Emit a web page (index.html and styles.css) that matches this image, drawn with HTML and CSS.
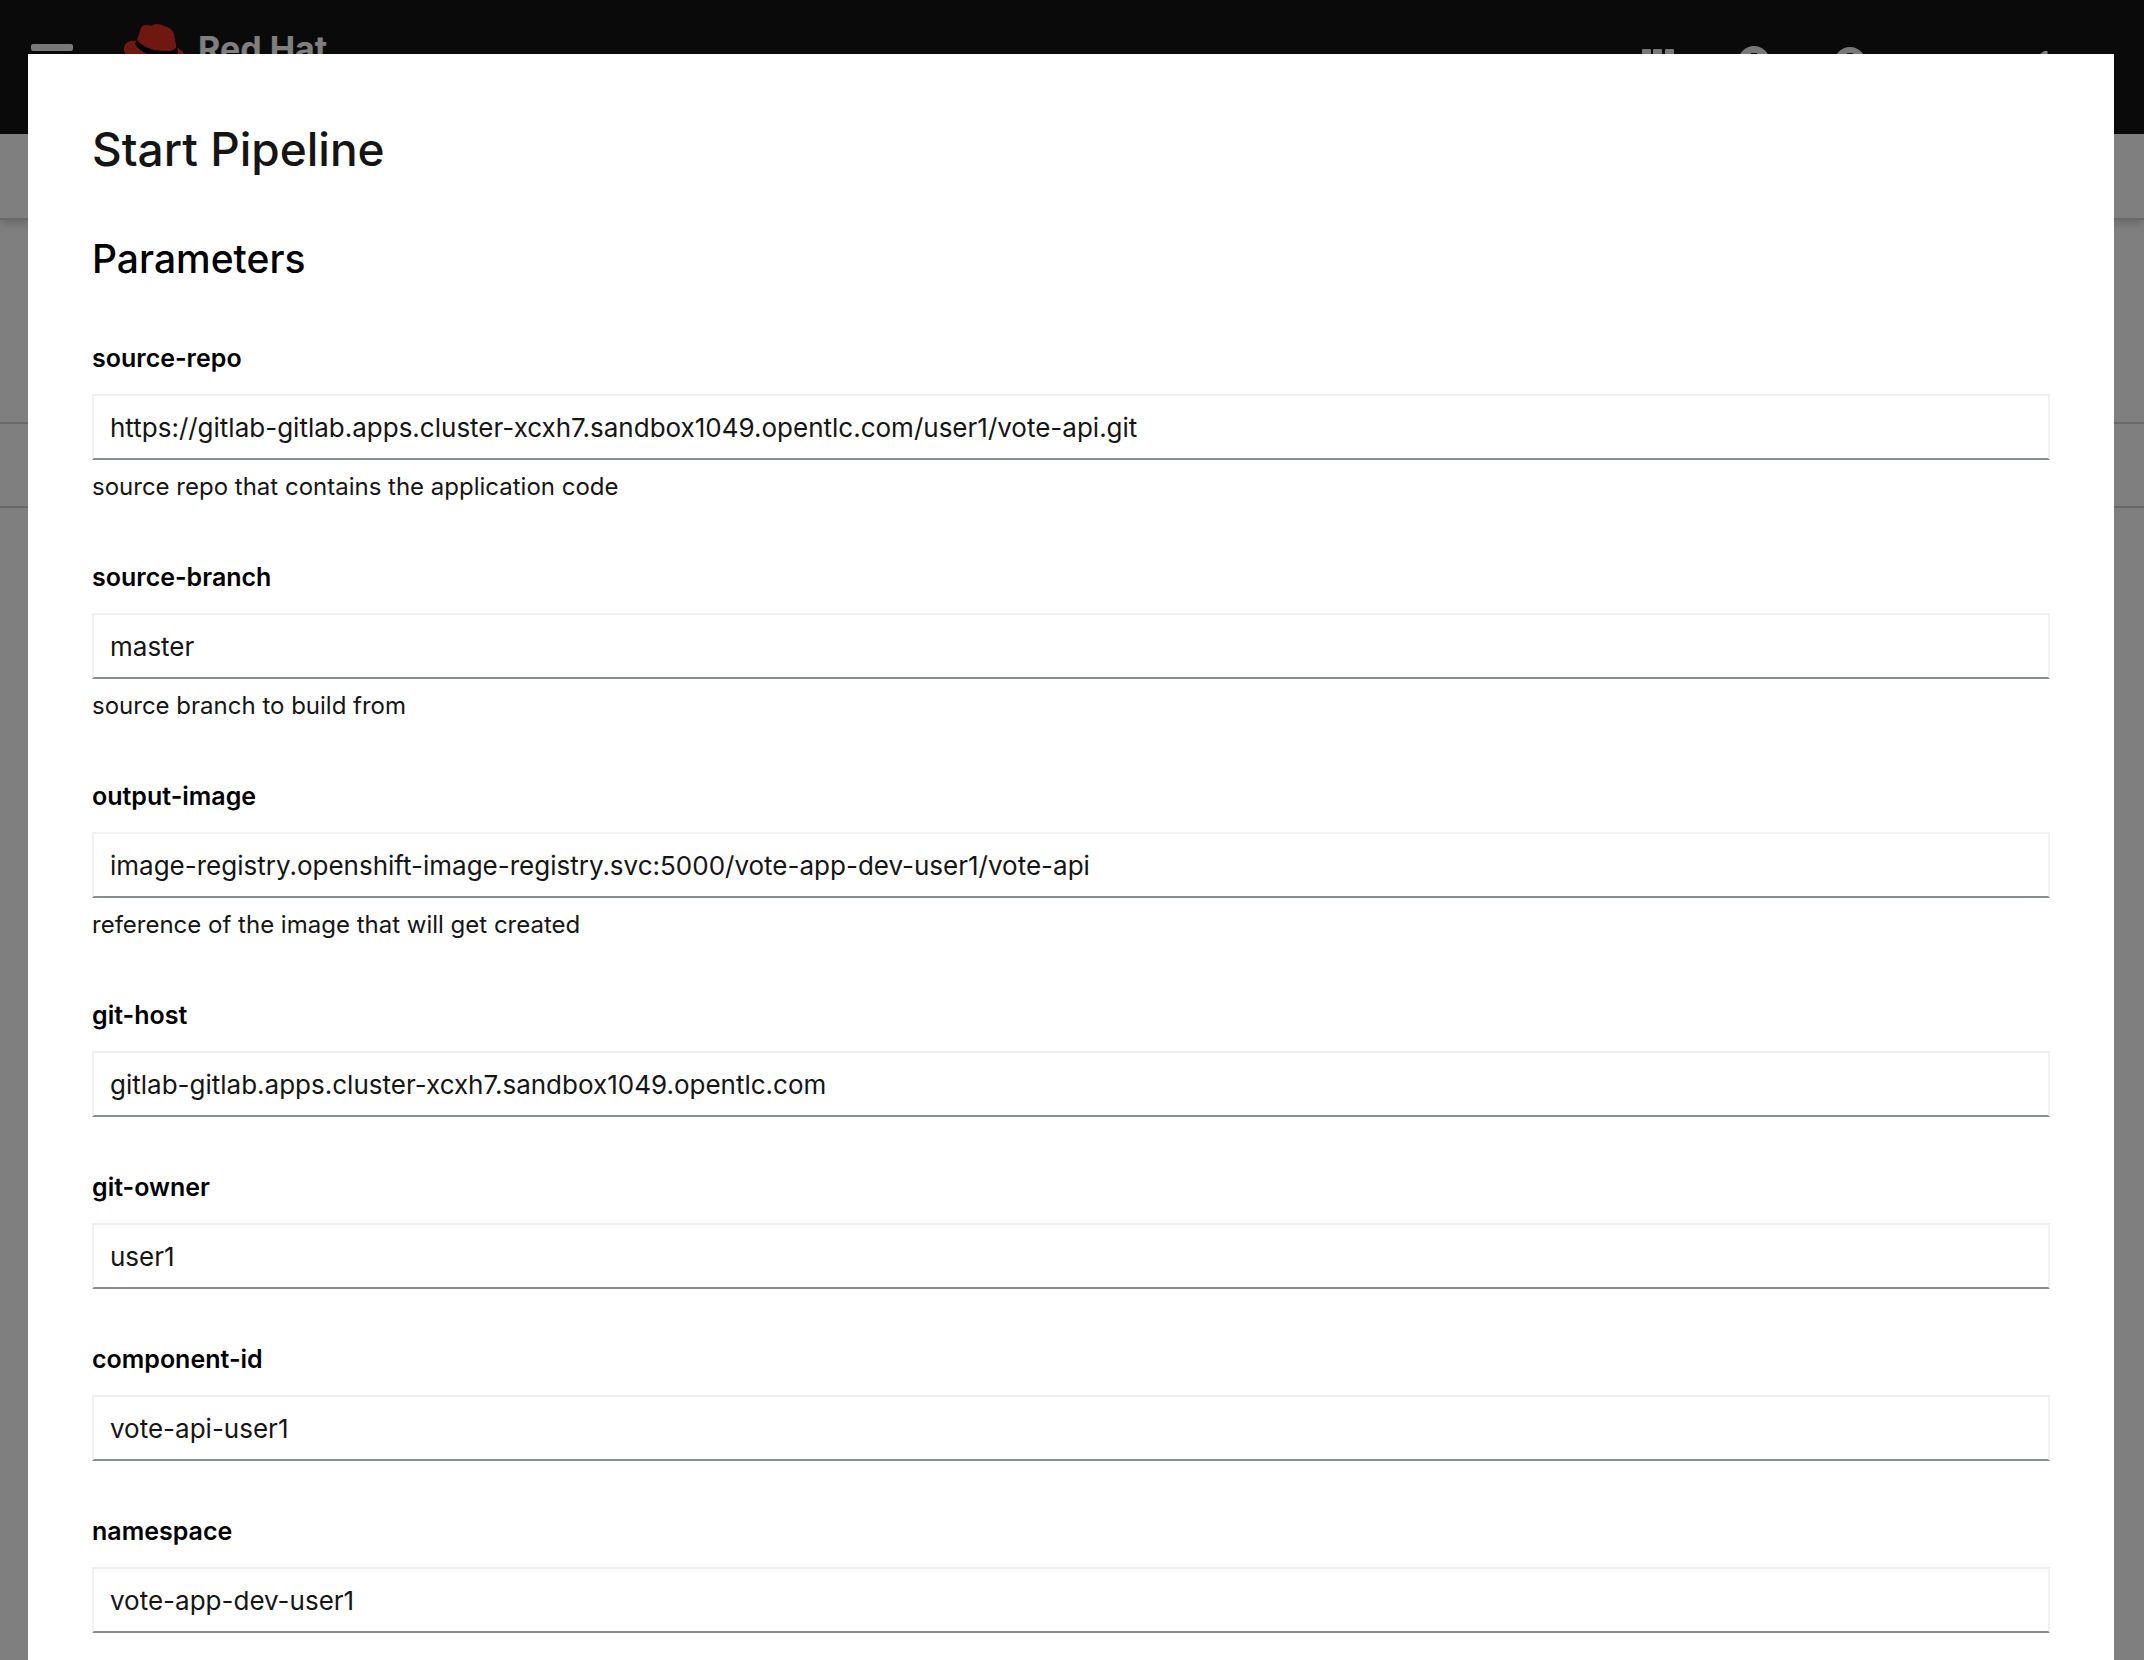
FILE: index.html
```html
<!DOCTYPE html>
<html lang="en">
<head>
<meta charset="utf-8">
<meta name="viewport" content="width=device-width, initial-scale=1">
<title>Start Pipeline</title>
<link rel="stylesheet" href="styles.css">
</head>
<body>
<div class="page">
  <header class="masthead">
    <button class="icon-button menu" type="button" aria-label="Toggle navigation"><span class="bar"></span><span class="bar"></span><span class="bar"></span></button>
    <a class="brand" href="#">
      <svg class="hat" viewBox="0 0 62 48" aria-hidden="true">
        <path fill="#dc3020" d="M13 17C8 16 2 17 0 23C-2 33 16 46 37 47C54 48 62 42 62 35C62 31 59 27 54 24L40 29L20 26Z"/>
        <path fill="#000" d="M13 15L11 20C16 29 33 36 48 34C52 33 54 31 54 26L52 22Z"/>
        <path fill="#dc3020" d="M13 16L17 4C18 1 21 0 28 2C31-1 36 0 40 2C46 4 49 6 50 10L52 21C53 25 49 27 43 27C30 28 17 22 13 16Z"/>
      </svg>
      <span>Red Hat</span>
    </a>
    <nav class="tools">
      <button class="icon-button" type="button" aria-label="Applications"><svg viewBox="0 0 32 32" fill="currentColor"><path d="M1 0h7q1 0 1 1v8H0V1q0-1 1-1zM12 0h7q1 0 1 1v8h-9V1q0-1 1-1zM24 0h7q1 0 1 1v8h-9V1q0-1 1-1zM0 12h9v9H0zM11 12h9v9h-9zM23 12h9v9h-9zM0 23h9v9H0zM11 23h9v9h-9zM23 23h9v9h-9z"/></svg></button>
      <button class="icon-button" type="button" aria-label="Add"><svg viewBox="0 0 32 32"><circle cx="16" cy="13" r="16" fill="currentColor"/><path d="M16 4v18M7 13h18" stroke="#151515" stroke-width="6"/></svg></button>
      <button class="icon-button" type="button" aria-label="Help"><svg viewBox="0 0 32 32"><circle cx="16" cy="14" r="16" fill="currentColor"/><path d="M11 10q1-4 5-4t5 4q0 3-5 5v2M16 20v4" fill="none" stroke="#151515" stroke-width="4"/></svg></button>
    </nav>
    <button class="user" type="button">user1</button>
  </header>
  <div class="project-bar"></div>
  <div class="page-title"></div>
  <div class="tabs"></div>
</div>

<div class="backdrop">
  <main class="modal" role="dialog" aria-modal="true" aria-labelledby="title">
    <h1 id="title">Start Pipeline</h1>
    <form class="form">
      <h2>Parameters</h2>
      <div class="field">
        <label for="source-repo">source-repo</label>
        <input id="source-repo" type="text" value="https://gitlab-gitlab.apps.cluster-xcxh7.sandbox1049.opentlc.com/user1/vote-api.git">
        <p>source repo that contains the application code</p>
      </div>
      <div class="field">
        <label for="source-branch">source-branch</label>
        <input id="source-branch" type="text" value="master">
        <p>source branch to build from</p>
      </div>
      <div class="field">
        <label for="output-image">output-image</label>
        <input id="output-image" type="text" value="image-registry.openshift-image-registry.svc:5000/vote-app-dev-user1/vote-api">
        <p>reference of the image that will get created</p>
      </div>
      <div class="field">
        <label for="git-host">git-host</label>
        <input id="git-host" type="text" value="gitlab-gitlab.apps.cluster-xcxh7.sandbox1049.opentlc.com">
      </div>
      <div class="field">
        <label for="git-owner">git-owner</label>
        <input id="git-owner" type="text" value="user1">
      </div>
      <div class="field">
        <label for="component-id">component-id</label>
        <input id="component-id" type="text" value="vote-api-user1">
      </div>
      <div class="field">
        <label for="namespace">namespace</label>
        <input id="namespace" type="text" value="vote-app-dev-user1">
      </div>
    </form>
  </main>
</div>
</body>
</html>
```

FILE: styles.css
```css
* {
  box-sizing: border-box;
}

body {
  margin: 0;
  overflow: hidden;
  color: #151515;
  background: #fff;
  font-family: Inter, "Liberation Sans", sans-serif;
}

h1, h2, p {
  margin: 0;
}

button, input {
  font: inherit;
  color: inherit;
}

button {
  padding: 0;
  border: 0;
  background: none;
}

/* Page behind the dialog */
.masthead {
  display: flex;
  align-items: flex-start;
  height: 134px;
  padding: 0 94px 0 31px;
  color: #fff;
  background: #151515;
}

.icon-button {
  color: #f0f0f0;
}

.menu {
  display: grid;
  gap: 10px;
  width: 42px;
  margin-top: 44px;
}

.bar {
  height: 7px;
  border-radius: 2px;
  background: currentColor;
}

.brand {
  display: flex;
  gap: 12px;
  margin: 24px auto 0 51px;
  color: #fff;
  font-size: 34px;
  font-weight: 700;
  line-height: 50px;
  text-decoration: none;
}

.hat {
  width: 62px;
  height: 48px;
}

.tools {
  display: flex;
  gap: 64px;
  margin: 49px 114px 0 0;
}

.tools svg {
  display: block;
  width: 32px;
  height: 32px;
  overflow: visible;
}

.user {
  margin-top: 44px;
  font-size: 28px;
  line-height: 36px;
}

.project-bar {
  position: relative;
  height: 86px;
  border-bottom: 2px solid #d2d2d2;
  box-shadow: 0 4px 8px rgba(0, 0, 0, .16);
}

.page-title {
  height: 204px;
  border-bottom: 2px solid #d2d2d2;
}

.tabs {
  height: 84px;
  border-bottom: 2px solid #d2d2d2;
}

/* Dialog */
.backdrop {
  position: fixed;
  inset: 0;
  padding: 54px 30px 0 28px;
  overflow-y: auto;
  scrollbar-width: none;
  background: rgba(0, 0, 0, .5);
}

.modal {
  min-height: 100%;
  padding: 64px;
  background: #fff;
}

h1 {
  font-size: 46px;
  font-weight: 500;
  line-height: 62px;
}

.form {
  display: grid;
  gap: 49px;
  padding-top: 50px;
  color: #000;
}

h2 {
  font-size: 39px;
  font-weight: 500;
  line-height: 58px;
}

.field {
  display: grid;
}

.field label {
  margin-bottom: 15px;
  font-size: 25px;
  font-weight: 600;
  line-height: 42px;
}

.field input {
  width: 100%;
  height: 66px;
  padding: 0 16px;
  border: 2px solid #f0f0f0;
  border-bottom-color: #8a8d90;
  border-radius: 0;
  outline: 0;
  background: #fff;
  color: #151515;
  font-size: 26px;
}

.field p {
  margin-top: 7px;
  color: #151515;
  font-size: 24px;
  line-height: 40px;
}
```
